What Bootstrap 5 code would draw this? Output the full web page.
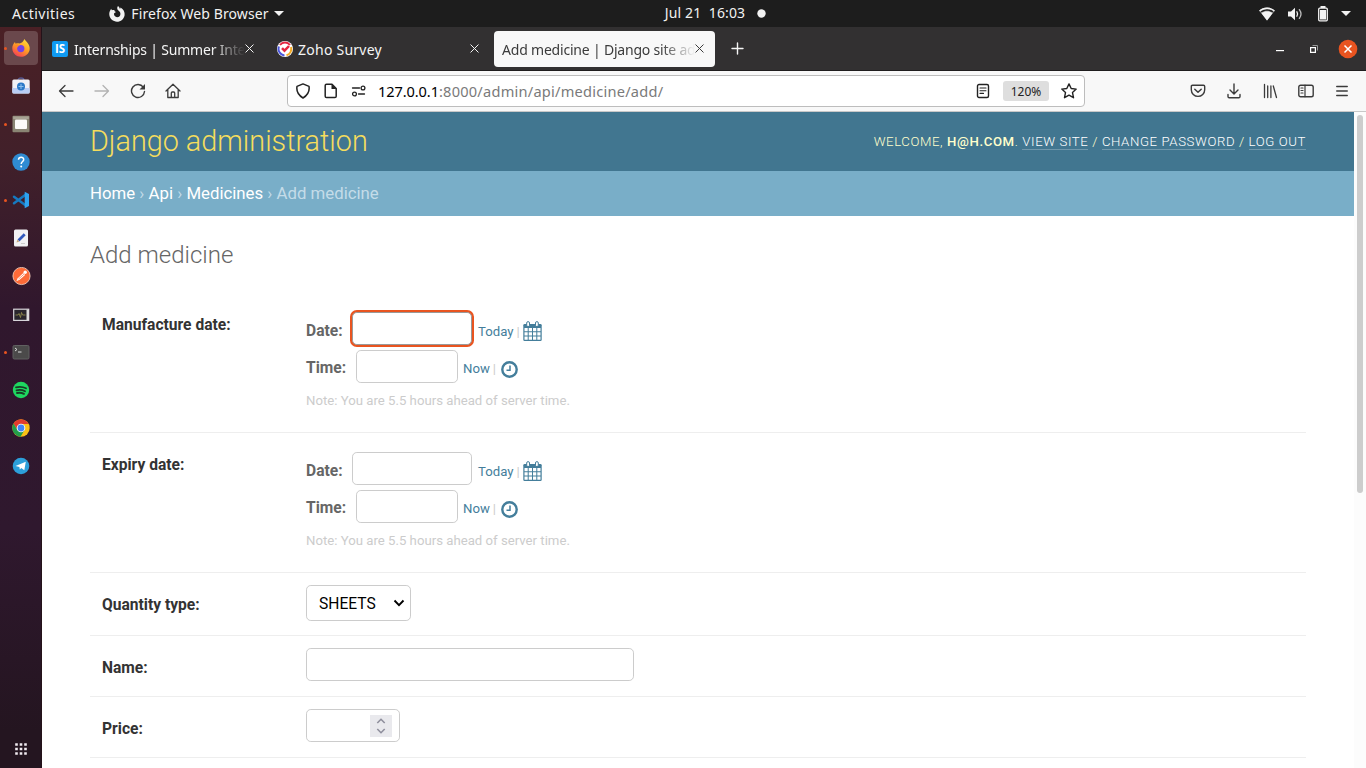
<!DOCTYPE html>
<html lang="en">
<head>
<meta charset="utf-8">
<meta name="viewport" content="width=device-width, initial-scale=1">
<title>Add medicine | Django site admin</title>
<link rel="stylesheet" href="https://cdn.jsdelivr.net/npm/bootstrap@5.3.0/dist/css/bootstrap.min.css">
<style>
  body { height: 768px; font-family: "Noto Sans", "Open Sans", sans-serif; font-size: 14px; line-height: 1; background: #fff; }
  svg { display: block; flex: none; }
  .ln { fill: none; stroke: currentColor; stroke-linecap: round; stroke-linejoin: round; }
  .slot { flex: none; display: flex; align-items: center; justify-content: center; }

  /* desktop top bar */
  .topbar { height: 27px; background: #1d1d1d; color: #f2f2f2; display: grid; grid-template-columns: 1fr auto 1fr; }
  .topbar .activities { letter-spacing: .5px; margin-left: 12px; }
  .topbar .app-name { letter-spacing: .1px; margin-left: 5px; }
  .topbar .clock { margin-left: 65px; }
  .topbar .clock-text { white-space: pre; letter-spacing: .12px; padding-bottom: 2px; }
  .topbar .ico { width: 28px; }

  /* dock */
  .dock { width: 42px; background: linear-gradient(#4a2025, #41202a 18%, #30172d 38%, #2f182e 68%, #241520 95%); padding-top: 2px; border-right: 1px solid #241219; }
  .dock-item { width: 42px; height: 38px; position: relative; }
  .dock-item.active-app::before { content: ""; position: absolute; left: 4px; top: 2px; width: 34px; height: 34px; border-radius: 4px; background: #6a484c; }
  .dock-item svg { position: relative; }
  .dock-item.running::after { content: ""; position: absolute; left: 4px; top: 18px; width: 3px; height: 3px; border-radius: 50%; background: #e95420; }

  /* browser chrome */
  .tabstrip { height: 44px; background: #323031; border-bottom: 1px solid #1f1d1e; padding: 0 8px 0 2px; color: #f5f5f5; }
  .tab-item { width: 221px; height: 36px; padding: 0 11px 0 8px; border-radius: 4px; }
  .tab-item.current { background: #f8f8f8; color: #3b3b3b; }
  .tab-text { flex: 1 1 0; min-width: 0; overflow: hidden; white-space: nowrap; line-height: 22px; padding-top: 2px; letter-spacing: -.2px; }
  .tab-text.wide { letter-spacing: .25px; }
  .faded { -webkit-mask-image: linear-gradient(to left, transparent 0, #000 34px); mask-image: linear-gradient(to left, transparent 0, #000 34px); }
  .toolbar { height: 41px; background: #f8f8f8; border-bottom: 1px solid #c8c8c8; padding: 0 6px; color: #3b3b3b; }
  .toolbar .slot { width: 36px; height: 36px; }
  .urlbox { width: 798px; height: 32px; background: #fff; border: 1px solid #bdbdbd; border-radius: 4px; padding: 0 1px; }
  .toolbar .urlbox .slot { width: 28px; height: 28px; color: #222; }
  .url { font-size: 14.6px; color: #7a7a7a; line-height: 22px; letter-spacing: .23px; }
  .url .host { color: #000; letter-spacing: -.1px; }
  .toolbar .urlbox .zoom-pill { width: 46px; height: 20px; margin: 0 6px; background: #dedede; border-radius: 3px; font-size: 12px; padding-top: 1px; }

  /* django admin page */
  .page { font-family: Roboto, sans-serif; background: #fff; }
  .dj-header { height: 59px; background: #417690; padding: 0 48px; color: #ffc; }
  .branding { font-size: 28.8px; font-weight: 300; color: #f5dd5d; line-height: 34px; margin-bottom: 2px; }
  .user-tools { font-size: 13.2px; font-weight: 300; letter-spacing: .6px; line-height: 17px; }
  .user-tools a { color: #fff; border-bottom: 1px solid rgba(255,255,255,.25); text-decoration: none; }
  .user-tools strong { font-weight: 500; }
  .crumbs { height: 45px; background: #79aec8; color: #c4dce8; padding: 0 48px; font-size: 16.8px; }
  .crumbs a { color: #fff; text-decoration: none; }
  .content-area { padding: 24px 48px 0; }
  .content-area h1 { font-size: 24px; font-weight: 300; color: #666; height: 30px; line-height: 30px; margin: 0 0 23px; }
  .frow { border-bottom: 1px solid #eee; padding: 12px; font-size: 15.6px; }
  .frow-date { height: 140px; }
  .frow-select { height: 63px; }
  .frow-text { height: 61px; }
  .frow-label { width: 204px; font-weight: 700; color: #333; line-height: 19px; padding-top: 11px; }
  .box { border: 1px solid #ccc; border-radius: 4.8px; background: #fff; height: 33px; padding: 0; outline: 0; display: block; }
  .box-date { width: 120px; }
  .box-date.focused { border-color: #999; box-shadow: 0 0 0 2px #e95420; }
  .box-time { width: 102px; }
  .box-name { width: 328px; }
  .box-price { width: 94px; padding: 0 7px; }
  .spin { width: 22px; height: 22px; background: #e9e9ed; }
  .dt { padding-top: 7px; gap: 5px; }
  .dt-label { font-weight: 700; color: #666; line-height: 19px; }
  .dt-label.d { width: 46px; padding-top: 5px; } .dt-label.t { width: 50px; padding-top: 3px; }
  .shortcuts { font-size: 13.2px; color: #ccc; height: 20px; margin-top: 5px; }
  .shortcuts a { color: #447e9b; text-decoration: none; }
  .shortcuts .t-dn { padding-top: 2px; }
  .note { font-size: 13.2px; color: #ccc; line-height: 16px; margin-top: 5px; }
  .sel { width: 105px; height: 36px; border: 1px solid #ccc; border-radius: 4.8px; font-size: 15.6px; color: #000; padding: 0 5px 0 12px; }
  .sel span { padding-top: 3px; }
  .scroll-track { width: 12px; padding: 3px 3px 0; background: #fcfcfc; }
  .scroll-thumb { height: 378px; border-radius: 3px; background: #cdcdcd; }
</style>
</head>
<body class="overflow-hidden d-flex flex-column">

<header class="topbar align-items-center">
  <div class="d-flex align-items-center">
    <span class="activities">Activities</span>
    <svg style="margin-left:33px" width="18" height="18" viewBox="0 0 18 18"><path fill="#f2f2f2" d="M10 1c1.2 1 1.8 2 1.9 3 .5-.5.6-1 .6-1.500C15.500 4.300 17 7 16.600 10.200 16 14 12.800 16.700 9 16.700S1.700 13.700 1.300 9.800C1 7.400 2 5 3.300 3.700c.1.700.3 1.200.6 1.600.7-.4 1.700-.5 2.600-.3C6 6 7 6.800 8.300 7c-.8.300-1.600.7-2.300 1.600-.2 2 1.200 3.600 3.100 3.600 2.200 0 3.500-1.700 3.300-3.800-.2-1.500-1.500-2.400-2.500-3.300C9 4 9 2.300 10 1z"/></svg>
    <span class="app-name">Firefox Web Browser</span>
    <svg style="margin-left:5px" width="10" height="5" viewBox="0 0 10 5"><path fill="#f2f2f2" d="M0 0h10L5 5z"/></svg>
  </div>
  <div class="clock d-flex align-items-center"><span class="clock-text">Jul 21  16:03</span><svg style="margin-left:12px" width="9" height="9"><circle cx="4.500" cy="4.500" r="4.200" fill="#f2f2f2"/></svg></div>
  <div class="d-flex align-items-center justify-content-end" style="padding-right:11px">
    <span class="slot ico"><svg width="16" height="14" viewBox="0 0 16 14"><path fill="#aaa" d="M8 13.500.2 3.600C4.500-.4 11.500-.4 15.800 3.600z"/><path fill="#1d1d1d" d="M1.700 4.300C5.400 1.400 10.600 1.400 14.300 4.300l-1 1.300C10 3 6 3 2.700 5.600z"/><path fill="#f2f2f2" d="M8 13.500 2.500 6.300C5.500 3.800 10.500 3.800 13.500 6.300zM.2 3.600C4.500-.4 11.500-.4 15.800 3.600l-.7.9C11 1 5 1 .9 4.500z"/></svg></span>
    <span class="slot ico"><svg width="16" height="14" viewBox="0 0 16 14"><path fill="#f2f2f2" d="M1 4.500h3L8 .8v12.400L4 9.500H1z"/><path class="ln" stroke-width="1.300" d="M9.900 4.800q1.400 2.200 0 4.400"/><path class="ln" style="stroke:#bbb" stroke-width="1.300" d="M12.400 2.600q3.200 4.400 0 8.800"/></svg></span>
    <span class="slot ico"><svg width="12" height="16" viewBox="0 0 12 16"><rect x="1.700" y="2.200" width="8.600" height="12.600" rx="1" fill="none" stroke="#f2f2f2" stroke-width="1.300"/><path fill="#f2f2f2" d="M3.500 0h5v2h-5zM3 4h6v9.500H3z"/></svg></span>
    <span class="slot" style="width:18px"><svg width="10" height="5" viewBox="0 0 10 5"><path fill="#f2f2f2" d="M0 0h10L5 5z"/></svg></span>
  </div>
</header>

<div class="d-flex flex-grow-1" style="min-height:0">
  <nav class="dock d-flex flex-column flex-shrink-0">
    <div class="dock-item slot active-app running"><svg width="18" height="18" viewBox="0 0 18 18"><defs><linearGradient id="fx" x1=".8" y1="0" x2=".2" y2="1"><stop offset="0" stop-color="#ffe13a"/><stop offset=".5" stop-color="#ff9a25"/><stop offset="1" stop-color="#f3365b"/></linearGradient></defs><path fill="url(#fx)" d="M12.500 0c.5 1.500 2.200 2.600 3.300 4.300C17 6 17.900 8 17.700 10 17.300 14.500 13.700 17.800 9 17.800S.7 14.300.3 9.800C0 7 1.500 4.600 3 3c.1.800.4 1.300.7 1.700C4.600 4.200 5.500 4.100 6.500 4.300 9 5 11 3 12.500 0z"/><circle cx="8.800" cy="9.600" r="3.600" fill="#7542e5"/><path fill="#ff8b25" d="M3 6c1.500-1 3.500-.5 4.800.8-1 .2-2 .5-2.300 1.200L4 9z"/></svg></div>
    <div class="dock-item slot"><svg width="18" height="18" viewBox="0 0 18 18"><path d="M6 3.500q0-2.500 3-2.500t3 2.500" fill="none" stroke="#56578f" stroke-width="1.300"/><rect x=".3" y="2.500" width="17.400" height="14" rx="1.500" fill="#f0f0f5"/><path fill="#b9cdf4" d="M.3 11h17.400v4q0 1.500-1.500 1.500H1.800Q.3 16.500.3 15z"/><circle cx="9" cy="9.500" r="4" fill="#2b78c7"/><path d="M6.500 9.500h5M9 7v5" stroke="#8fc0ee"/></svg></div>
    <div class="dock-item slot running"><svg width="18" height="18" viewBox="0 0 18 18"><rect x=".5" y=".8" width="17" height="16.500" rx="1" fill="#8a8574"/><rect x="1.200" y="1.500" width="15.600" height="2.500" fill="#a7a294"/><rect x="3" y="4.500" width="12" height="9.500" rx="1" fill="#fcfaf8"/></svg></div>
    <div class="dock-item slot"><svg width="18" height="18" viewBox="0 0 18 18"><circle cx="9" cy="9" r="8.700" fill="#2f8bd2"/><path d="M6.500 6.800C6.700 3.500 11.800 3.600 11.700 6.700 11.600 8.500 9.200 8.700 9.200 11" fill="none" stroke="#fff" stroke-width="1.500"/><circle cx="9.200" cy="13.500" r="1" fill="#fff"/></svg></div>
    <div class="dock-item slot running"><svg width="18" height="18" viewBox="0 0 18 18"><path d="M2 5.700 13.500 14.200M2 12.300 13.500 3.800" fill="none" stroke="#1679c0" stroke-width="2.500" stroke-linecap="round"/><path fill="#2ea1ee" d="M12.700.8 17 3v12l-4.300 2.200z"/></svg></div>
    <div class="dock-item slot"><svg width="16" height="18" viewBox="0 0 16 18"><rect x="1" y=".5" width="14" height="17" rx="1.500" fill="#f1f1f3"/><path d="M5.500 11.500 11.700 5.200" stroke="#3159bd" stroke-width="2.700"/><path fill="#c9a77c" d="m3.500 13.500.9-3 2 2z"/><path d="M8 14.500h4" stroke="#ccc"/></svg></div>
    <div class="dock-item slot"><svg width="19" height="19" viewBox="0 0 19 19"><circle cx="9.500" cy="9" r="8.600" fill="#fd6b38" stroke="#f9d5c5" stroke-width=".8"/><path fill="#fff" d="m4.300 14.300 1.500-3 5.500-5.200 1.800 1.800-5.500 4.800z"/><path d="m6.500 12 5.500-4.800" stroke="#fd6b38" stroke-width=".7"/><circle cx="13.200" cy="5.200" r="1.700" fill="#fff"/></svg></div>
    <div class="dock-item slot"><svg style="margin-top:2px" width="18" height="14" viewBox="0 0 18 14"><rect x="1.700" y="1.200" width="15" height="11.200" fill="#29262d" stroke="#d8d5da" stroke-width="1.200"/><path fill="#ddd" d="M14.500 1.500H17v10.500h-2.500z"/><path d="M3.500 7H6l1-1.500 1.500 4L9.500 4.500l1 2.500h3" fill="none" stroke="#8f8a4c" stroke-width=".9"/></svg></div>
    <div class="dock-item slot running"><svg width="18" height="15" viewBox="0 0 18 15"><rect x="1" y=".5" width="16" height="13.500" rx="1.300" fill="#4b4a4a" stroke="#616161"/><path d="m3 3 2 1.500L3 6M6 7h3.500" fill="none" stroke="#ddd"/></svg></div>
    <div class="dock-item slot"><svg width="18" height="18" viewBox="0 0 18 18"><circle cx="9" cy="9" r="8.200" fill="#1ed760"/><path class="ln" style="stroke:#183c25" stroke-width="1.800" d="M4 6.300q5.500-1.300 10 1M4.500 9.300q4.800-1 8.500 1M5 12q3.800-.8 7 .9"/></svg></div>
    <div class="dock-item slot"><svg width="18" height="18" viewBox="0 0 18 18"><circle cx="9" cy="9" r="8.700" fill="#fbc116"/><path fill="#e23b2e" d="M1.500 4.600A8.700 8.700 0 0 1 16.600 5H9L5.600 11z"/><path fill="#229e4b" d="M1.500 4.600A8.700 8.700 0 0 0 8.500 17.700L12.500 11H5.600z"/><circle cx="9" cy="9" r="4.300" fill="#fff"/><circle cx="9" cy="9" r="3.400" fill="#4285f4"/></svg></div>
    <div class="dock-item slot"><svg width="18" height="18" viewBox="0 0 18 18"><circle cx="9" cy="9" r="8.300" fill="#2c9fda"/><path fill="#fff" d="m3.500 9 10.300-4.300-1.500 8.600-3-2.200-1.500 1.500-.4-2.500z"/></svg></div>
    <div class="dock-item slot mt-auto"><svg width="12" height="12" viewBox="0 0 12 12" fill="#f0eaf0"><path d="M.2.200h2.600v2.600H.2zM4.700.2h2.600v2.600H4.700zM9.200.2h2.600v2.600H9.200zM.2 4.700h2.600v2.600H.2zM4.700 4.700h2.600v2.600H4.700zM9.200 4.700h2.600v2.600H9.200zM.2 9.200h2.600v2.600H.2zM4.700 9.200h2.600v2.600H4.700zM9.200 9.200h2.600v2.600H9.200z"/></svg></div>
  </nav>

  <div class="d-flex flex-column flex-grow-1" style="min-width:0">
    <div class="tabstrip d-flex align-items-center gap-1">
      <div class="tab-item d-flex align-items-center">
        <svg width="16" height="16" viewBox="0 0 16 16"><rect width="16" height="16" rx="2" fill="#0f9af2"/><text x="8" y="12.200" text-anchor="middle" font-family="Open Sans, sans-serif" font-weight="700" font-size="11.500" fill="#fff">IS</text></svg>
        <span class="tab-text faded" style="margin-left:6px">Internships | Summer Inte</span>
        <svg width="9" height="9" viewBox="0 0 9 9"><path class="ln" d="m.8.800 7.400 7.400m0-7.400L.8 8.200"/></svg>
      </div>
      <div class="tab-item d-flex align-items-center">
        <svg width="16" height="16" viewBox="0 0 16 16"><circle cx="8" cy="8" r="8" fill="#fff"/><g fill="none" stroke-width="2"><path stroke="#e42540" d="M3 4A6.300 6.300 0 0 1 13 4"/><path stroke="#4b55db" d="M2 5.500A6.500 6.500 0 0 0 7.500 14.400"/><path stroke="#f4aa25" d="M14 6A6.500 6.500 0 0 1 9.500 14.300"/><path stroke="#e42540" stroke-width="2.500" d="m5 7.200 2.500 2.500L12 5"/></g></svg>
        <span class="tab-text wide" style="margin-left:5px">Zoho Survey</span>
        <svg width="9" height="9" viewBox="0 0 9 9"><path class="ln" d="m.8.800 7.400 7.400m0-7.400L.8 8.200"/></svg>
      </div>
      <div class="tab-item current d-flex align-items-center">
        <span class="tab-text faded">Add medicine | Django site ad</span>
        <svg width="9" height="9" viewBox="0 0 9 9"><path class="ln" d="m.8.800 7.400 7.400m0-7.400L.8 8.200"/></svg>
      </div>
      <svg style="margin-left:12px" width="13" height="13" viewBox="0 0 13 13"><path class="ln" stroke-width="1.400" d="M6.500 1v11M1 6.500h11"/></svg>
      <div class="ms-auto d-flex align-items-center">
        <svg style="margin-right:26px;margin-top:4px" width="8" height="2"><path fill="#fff" d="M0 0h8v1.200H0z"/></svg>
        <svg style="margin-right:20px" width="8" height="8" viewBox="0 0 8 8"><path d="M2.500.5h5v5" fill="none" stroke="#999"/><path d="M.6 2.600h4.800v4.800H.6z" fill="none" stroke="#fff" stroke-width="1.200"/></svg>
        <svg width="20" height="20" viewBox="0 0 20 20"><circle cx="10" cy="10" r="9.300" fill="#e95420"/><path d="m6.500 6.500 7 7m0-7-7 7" stroke="#fff" stroke-width="1.500"/></svg>
      </div>
    </div>

    <div class="toolbar d-flex align-items-center">
      <span class="slot"><svg width="16" height="16" viewBox="0 0 16 16"><path class="ln" stroke-width="1.300" d="M15 8H1.500M7 2.500 1.500 8 7 13.500"/></svg></span>
      <span class="slot" style="color:#b3b3b3"><svg width="16" height="16" viewBox="0 0 16 16"><path class="ln" stroke-width="1.300" d="M1 8h13.500M9 2.500 14.500 8 9 13.500"/></svg></span>
      <span class="slot"><svg width="16" height="16" viewBox="0 0 16 16"><path class="ln" stroke-width="1.400" d="M13.300 4.200A6.500 6.500 0 1 0 14.500 8.500"/><path d="M15 1v5.500H9.500z" fill="currentColor"/></svg></span>
      <span class="slot" style="width:34px"><svg width="16" height="16" viewBox="0 0 16 16"><path class="ln" stroke-width="1.300" d="M1 8 8 1.300 15 8M2.800 6.500v8h10.400v-8M6.300 14.500V10q0-1 1-1h1.400q1 0 1 1v4.500"/></svg></span>
      <div class="urlbox d-flex align-items-center" style="margin-left:97px">
        <span class="slot"><svg width="16" height="16" viewBox="0 0 16 16"><path class="ln" stroke-width="1.500" d="M8 .9 14 3.400Q15.200 10.500 8 15 .8 10.500 2 3.400z"/></svg></span>
        <span class="slot"><svg width="14" height="16" viewBox="0 0 14 16"><path class="ln" stroke-width="1.500" d="M2.500 1.300H8L12.200 5.500v7.700q0 1.300-1.300 1.300H2.500q-1.300 0-1.300-1.300V2.600q0-1.300 1.300-1.300z"/><path d="M7.500 1v5h5z" fill="currentColor"/></svg></span>
        <span class="slot"><svg width="16" height="12" viewBox="0 0 16 12"><path class="ln" stroke-width="1.300" d="M1.500 3h7M7.500 9h6"/><circle class="ln" stroke-width="1.300" cx="12" cy="3" r="1.900"/><circle class="ln" stroke-width="1.300" cx="3.500" cy="9" r="1.900"/></svg></span>
        <span class="url flex-grow-1" style="margin-left:5px"><span class="host">127.0.0.1</span>:8000/admin/api/medicine/add/</span>
        <span class="slot"><svg width="14" height="16" viewBox="0 0 14 16"><rect class="ln" stroke-width="1.400" x="1.500" y="1.500" width="11" height="13" rx="1.500"/><path class="ln" stroke-width="1.100" d="M4 5h6M4 7.700h6M4 10.400h3.500"/></svg></span>
        <span class="zoom-pill slot">120%</span>
        <span class="slot"><svg width="16" height="16" viewBox="0 0 16 16"><path class="ln" stroke-width="1.400" d="M8 .9 10.200 5.500l5 .6-3.700 3.500 1 5.100L8 12.200l-4.500 2.500 1-5.100L.8 6.100l5-.6z"/></svg></span>
      </div>
      <div class="d-flex ms-auto">
        <span class="slot"><svg width="16" height="14" viewBox="0 0 16 14"><path class="ln" stroke-width="1.400" d="M2.500 1.200h11q1.200 0 1.200 1.200v3.300a6.700 6.700 0 0 1-13.400 0V2.400q0-1.200 1.200-1.200z"/><path class="ln" stroke-width="1.500" d="M4.800 5.300 8 8.300l3.200-3"/></svg></span>
        <span class="slot"><svg width="14" height="16" viewBox="0 0 14 16"><path class="ln" stroke-width="1.400" d="M7 1v9.500M3 7l4 4 4-4M1 11.500v2q0 1.200 1.200 1.200h9.600q1.200 0 1.200-1.200v-2"/></svg></span>
        <span class="slot"><svg width="15" height="16" viewBox="0 0 15 16"><path class="ln" stroke-width="1.300" d="M1.500 1.500v13M4.700 3v11.500M7.900 3v11.500M10.300 3l3.200 11.500"/></svg></span>
        <span class="slot"><svg width="16" height="14" viewBox="0 0 16 14"><rect class="ln" stroke-width="1.400" x=".8" y="1.200" width="14.400" height="11.500" rx="1.800"/><path class="ln" stroke-width="1.200" d="M7 1.200v11.500M3 4h2M3 6.500h2M3 9h2"/></svg></span>
        <span class="slot"><svg width="12" height="12" viewBox="0 0 12 12"><path class="ln" stroke-width="1.300" d="M.7 1.500h10.600M.7 6h10.600M.7 10.500h10.600"/></svg></span>
      </div>
    </div>

    <div class="d-flex flex-grow-1 overflow-hidden" style="min-height:0">
      <main class="page flex-grow-1">
        <div class="dj-header d-flex align-items-center justify-content-between">
          <div class="branding">Django administration</div>
          <div class="user-tools">WELCOME, <strong>H@H.COM</strong>. <a href="#">VIEW SITE</a> / <a href="#">CHANGE PASSWORD</a> / <a href="#">LOG OUT</a></div>
        </div>
        <div class="crumbs d-flex align-items-center"><div><a href="#">Home</a> › <a href="#">Api</a> › <a href="#">Medicines</a> › Add medicine</div></div>
        <div class="content-area">
          <h1>Add medicine</h1>
          <form>
            <div class="frow frow-date d-flex">
              <label class="frow-label">Manufacture date:</label>
              <div class="dt d-flex flex-column">
                <div class="d-flex align-items-center"><span class="dt-label d">Date:</span><input class="box box-date focused" type="text"><span class="shortcuts d-flex align-items-center" style="margin-left:6px"><a class="t-dn" href="#">Today</a><span class="t-dn" style="margin:0 3px">|</span><svg width="19" height="20" viewBox="0 0 19 20"><use href="#cal"/></svg></span></div>
                <div class="d-flex align-items-center"><span class="dt-label t">Time:</span><input class="box box-time" type="text"><span class="shortcuts d-flex align-items-center" style="margin-left:5px"><a href="#">Now</a><span style="margin:0 5px 0 3px">|</span><svg width="17" height="17" viewBox="0 0 17 17"><use href="#clk"/></svg></span></div>
                <div class="note">Note: You are 5.5 hours ahead of server time.</div>
              </div>
            </div>
            <div class="frow frow-date d-flex">
              <label class="frow-label">Expiry date:</label>
              <div class="dt d-flex flex-column">
                <div class="d-flex align-items-center"><span class="dt-label d">Date:</span><input class="box box-date" type="text"><span class="shortcuts d-flex align-items-center" style="margin-left:6px"><a class="t-dn" href="#">Today</a><span class="t-dn" style="margin:0 3px">|</span><svg width="19" height="20" viewBox="0 0 19 20"><g id="cal"><path fill="#447e9b" d="M1.500 3h16q1.200 0 1.200 1.200v14.600q0 1.200-1.200 1.200h-16Q.3 20 .3 18.800V4.200Q.3 3 1.500 3z"/><path fill="#fff" d="M1.500 7h3.200v3.300H1.500zM5.700 7h3.300v3.300H5.700zM10 7h3.300v3.300H10zM14.300 7h3.200v3.300h-3.200zM1.500 11.300h3.200v3.300H1.500zM5.700 11.300h3.300v3.300H5.700zM10 11.300h3.300v3.300H10zM14.300 11.300h3.200v3.300h-3.200zM1.500 15.600h3.200v3.200H1.500zM5.700 15.600h3.300v3.200H5.700zM10 15.600h3.300v3.200H10zM14.300 15.600h3.200v3.200h-3.200z"/><rect x="3.700" y=".6" width="2.800" height="5" rx="1.400" fill="#fff" stroke="#447e9b"/><rect x="12.500" y=".6" width="2.800" height="5" rx="1.400" fill="#fff" stroke="#447e9b"/></g></svg></span></div>
                <div class="d-flex align-items-center"><span class="dt-label t">Time:</span><input class="box box-time" type="text"><span class="shortcuts d-flex align-items-center" style="margin-left:5px"><a href="#">Now</a><span style="margin:0 5px 0 3px">|</span><svg width="17" height="17" viewBox="0 0 17 17"><g id="clk" fill="none" stroke="#447e9b"><circle cx="8.500" cy="8.500" r="7.200" stroke-width="2.400"/><path stroke-width="1.500" d="M9 4.500V9.200H5.500"/></g></svg></span></div>
                <div class="note">Note: You are 5.5 hours ahead of server time.</div>
              </div>
            </div>
            <div class="frow frow-select d-flex">
              <label class="frow-label">Quantity type:</label>
              <div class="sel d-flex align-items-center justify-content-between"><span>SHEETS</span><svg width="12" height="8" viewBox="0 0 12 8"><path d="m1.500 1.500 4.500 4.600 4.500-4.600" fill="none" stroke="#000" stroke-width="1.900"/></svg></div>
            </div>
            <div class="frow frow-text d-flex">
              <label class="frow-label">Name:</label>
              <input class="box box-name" type="text">
            </div>
            <div class="frow frow-text d-flex">
              <label class="frow-label">Price:</label>
              <div class="box box-price d-flex align-items-center justify-content-end"><span class="spin slot"><svg width="10" height="16" viewBox="0 0 10 16"><path d="m1.300 5 3.700-3.700L8.700 5M1.300 11 5 14.700 8.700 11" fill="none" stroke="#8f8f9d" stroke-width="1.600"/></svg></span></div>
            </div>
          </form>
        </div>
      </main>
      <div class="scroll-track flex-shrink-0"><div class="scroll-thumb"></div></div>
    </div>
  </div>
</div>
<script src="https://cdn.jsdelivr.net/npm/bootstrap@5.3.0/dist/js/bootstrap.bundle.min.js"></script>
</body>
</html>
